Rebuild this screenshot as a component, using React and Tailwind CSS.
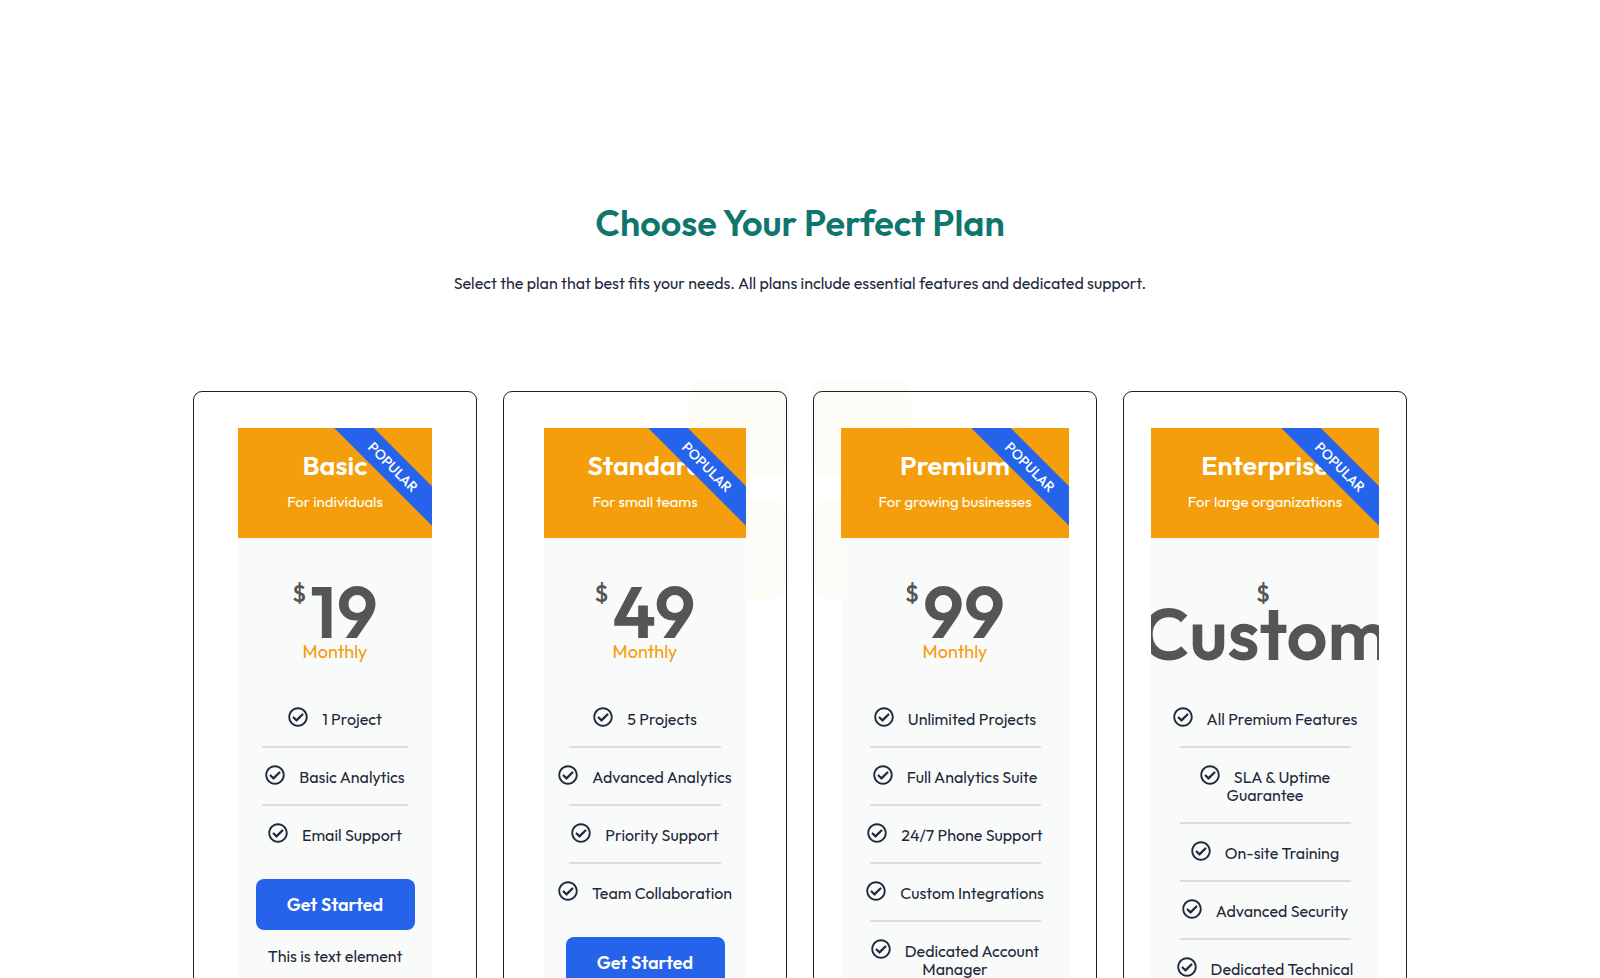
import React from 'react';
import { FaRegCheckCircle } from 'react-icons/fa';

const plans = [
  {
    name: 'Basic',
    note: 'For individuals',
    price: '19',
    period: 'Monthly',
    width: 'w-[194px]',
    features: ['1 Project', 'Basic Analytics', 'Email Support'],
  },
  {
    name: 'Standard',
    note: 'For small teams',
    price: '49',
    period: 'Monthly',
    width: 'w-[202px]',
    features: ['5 Projects', 'Advanced Analytics', 'Priority Support', 'Team Collaboration'],
  },
  {
    name: 'Premium',
    note: 'For growing businesses',
    price: '99',
    period: 'Monthly',
    width: 'w-full',
    features: [
      'Unlimited Projects',
      'Full Analytics Suite',
      '24/7 Phone Support',
      'Custom Integrations',
      'Dedicated Account Manager',
    ],
  },
  {
    name: 'Enterprise',
    note: 'For large organizations',
    price: 'Custom',
    width: 'w-full',
    features: [
      'All Premium Features',
      'SLA & Uptime Guarantee',
      'On-site Training',
      'Advanced Security',
      'Dedicated Technical Support',
    ],
  },
];

function Price({ plan }) {
  const wraps = !plan.period;
  return (
    <div className="flex h-[169px] flex-col items-center pt-[44px] text-[#555]">
      <div className={wraps ? 'flex flex-col items-center' : 'flex items-start'}>
        <span className="mr-1 text-2xl leading-[22px] font-medium">$</span>
        <span className="text-[72px] leading-[60px] font-semibold">{plan.price}</span>
      </div>
      {plan.period && (
        <span className="text-lg leading-5 text-[#f59e0b]">{plan.period}</span>
      )}
    </div>
  );
}

function PlanCard({ plan }) {
  return (
    <article className="flex flex-col items-center rounded-[9px] border border-[#222] px-[27px] py-9">
      <div className={`${plan.width} max-w-full overflow-hidden bg-[#f9fbfa] pb-9 text-center`}>
        <header className="relative h-[110px] overflow-hidden bg-[#f59e0b] pt-5 text-white">
          <h2 className="text-[27px] leading-[34px] font-semibold">{plan.name}</h2>
          <p className="mt-[10px] text-[15px] leading-5">{plan.note}</p>
          <span className="absolute top-[25px] right-[-41px] w-40 rotate-45 bg-[#2563eb] text-center text-sm leading-7 font-medium">
            POPULAR
          </span>
        </header>
        <Price plan={plan} />
        <ul>
          {plan.features.map((feature) => (
            <li key={feature} className="group text-base leading-[18px]">
              <div className="px-3 pb-[18px]">
                <FaRegCheckCircle className="mr-[14px] inline-block size-5 align-[-2px]" />
                {feature}
              </div>
              <div className="mx-auto mb-[17px] h-[2px] w-3/4 bg-[#ddd] group-last:hidden" />
            </li>
          ))}
        </ul>
        <button
          type="button"
          className="mt-[17px] h-[51px] w-[159px] rounded-lg bg-[#2563eb] text-lg font-semibold text-white"
        >
          Get Started
        </button>
        <p className="mt-[14px] text-base leading-6">This is text element</p>
      </div>
    </article>
  );
}

export default function App() {
  return (
    <main className="relative h-screen overflow-hidden bg-white font-['Outfit','Lato',sans-serif] text-[#1e293b]">
      <div className="absolute inset-0 grid place-items-center" aria-hidden="true">
        <div className="grid grid-cols-2 gap-[22px]">
          <span className="size-[100px] rounded-[20px] bg-[#fefcf7]" />
          <span className="size-[100px] rounded-[20px] bg-[#fefcf7]" />
          <span className="size-[100px] rounded-[20px] bg-[#fefcf7]" />
          <span className="size-[100px] rounded-[20px] bg-[#fefcf7]" />
        </div>
      </div>
      <section className="relative mx-auto max-w-[1214px] pt-[200px]">
        <h1 className="text-center text-4xl leading-[46px] font-semibold text-[#0f766e]">
          Choose Your Perfect Plan
        </h1>
        <p className="mt-[25px] text-center text-base leading-6">
          Select the plan that best fits your needs. All plans include essential features and dedicated support.
        </p>
        <div className="mt-24 grid grid-cols-4 gap-[26px]">
          {plans.map((plan) => (
            <PlanCard key={plan.name} plan={plan} />
          ))}
        </div>
      </section>
    </main>
  );
}
